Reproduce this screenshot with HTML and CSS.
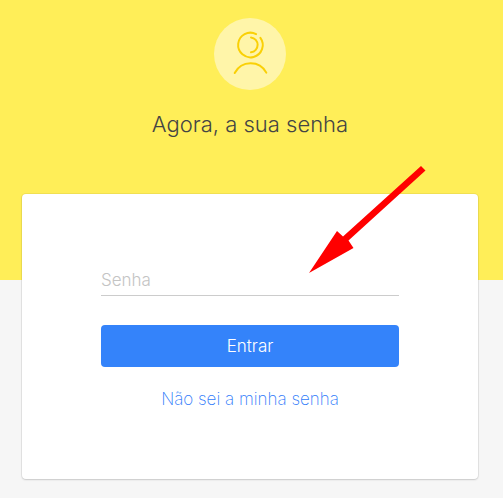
FILE: index.html
```html
<!DOCTYPE html>
<html lang="pt-BR">
<head>
<meta charset="utf-8">
<meta name="viewport" content="width=device-width, initial-scale=1">
<title>Entrar</title>
<link rel="stylesheet" href="styles.css">
</head>
<body>
<main class="page">
  <header class="intro">
    <div class="avatar">
      <svg viewBox="0 0 72 72" aria-hidden="true">
        <path d="M42.1 16.1A12.3 12.3 0 1 0 46.4 19.8"/>
        <path d="M37 19.4A7.5 7.5 0 0 1 37 34.3"/>
        <path d="M20.7 55C27.5 42 45.5 42 52.3 54.6"/>
      </svg>
    </div>
    <h1 class="title">Agora, a sua senha</h1>
  </header>
  <form class="card">
    <input class="field" type="password" placeholder="Senha" aria-label="Senha">
    <button class="submit" type="submit">Entrar</button>
    <a class="forgot" href="#">Não sei a minha senha</a>
    <svg class="arrow" viewBox="0 0 118 108" aria-hidden="true">
      <path d="M112 0L116.5 4.5L39.5 74.5L44.5 82L0 107L28 65L34 70.5Z"/>
    </svg>
  </form>
</main>
</body>
</html>
```
FILE: styles.css
```css
* {
  box-sizing: border-box;
}

body {
  margin: 0;
  min-height: 100vh;
  background: linear-gradient(#ffee58 280px, #f6f6f6 280px);
  font-family: Inter, "Open Sans", sans-serif;
  font-weight: 300;
}

.page {
  padding: 18px 25px 19px 22px;
}

.intro {
  display: flex;
  flex-direction: column;
  align-items: center;
}

.avatar {
  width: 72px;
  height: 72px;
  border-radius: 50%;
  background: #fff5a9;
}

.avatar svg {
  display: block;
  fill: none;
  stroke: #fad005;
  stroke-width: 2;
  stroke-linecap: round;
}

.title {
  margin: 18px 0 54px;
  color: #444;
  font-size: 22px;
  font-weight: 300;
  line-height: 32px;
}

.card {
  position: relative;
  display: flex;
  flex-direction: column;
  max-width: 456px;
  margin: 0 auto;
  padding: 70px 79px 68px;
  border-radius: 4px;
  background: #fff;
  box-shadow: 0 0 0 1px rgba(0, 0, 0, 0.05), 0 1px 2px rgba(0, 0, 0, 0.14);
}

.field {
  width: 100%;
  height: 32px;
  padding: 0;
  border: 0;
  border-bottom: 1px solid #ccc;
  border-radius: 0;
  outline: 0;
  background: transparent;
  font: inherit;
  font-size: 17px;
}

.field::placeholder {
  color: #c4c4c4;
  opacity: 1;
}

.submit {
  height: 42px;
  margin-top: 29px;
  padding: 0;
  border: 0;
  border-radius: 4px;
  background: #3483fa;
  color: #fff;
  font: inherit;
  font-size: 17px;
}

.forgot {
  align-self: center;
  margin-top: 20px;
  color: #2f7bfa;
  font-size: 17px;
  font-weight: 200;
  line-height: 24px;
  text-decoration: none;
}

.arrow {
  position: absolute;
  top: -28px;
  left: 287px;
  width: 118px;
  height: 108px;
  fill: #f00;
  pointer-events: none;
}
```
